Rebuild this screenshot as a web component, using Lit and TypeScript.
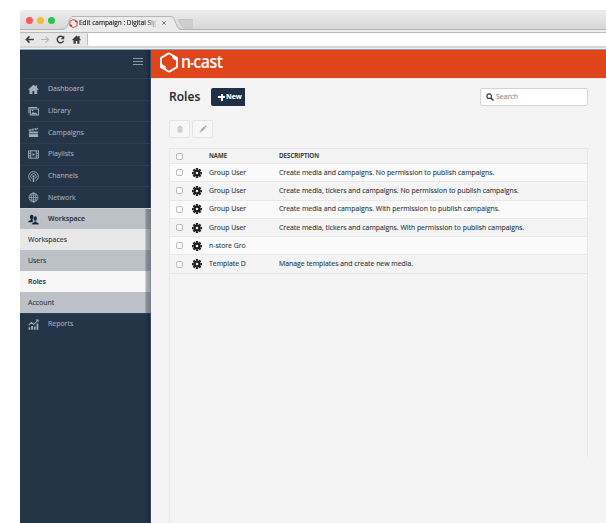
import { LitElement, html, css, svg, nothing } from "lit";
import { customElement } from "lit/decorators.js";
import { classMap } from "lit/directives/class-map.js";

const icons: Record<string, unknown> = {
  dashboard: svg`<path d="M6 .8 0 6.2h1.6V11h3.2V7.6h2V11H10V6.2h2L9.9 4.2V1.4H8.4v1.4z" fill="currentColor"/>`,
  library: svg`<path d="M1 8V1.6h9M2.5 3.3h9v6.5h-9z" fill="none" stroke="currentColor" stroke-width="1.1"/><path d="M3.2 9.2 5.6 6.4l1.7 1.4 1-.7 2.6 2.2z" fill="currentColor"/><circle cx="5" cy="5" r=".8" fill="currentColor"/>`,
  campaigns: svg`<path d="M1 5h10v6H1zM.8 2.6 11 .7v1.9L1 4.4z" fill="currentColor"/><path d="M3 1.8 4.2 4M6 1.2 7.2 3.4M9 .7l1.2 2.2M1 7.3h10" stroke="#243547" stroke-width=".8"/>`,
  playlists: svg`<path d="M.6 2h10.8v8H.6zM3 2v8M9 2v8" fill="none" stroke="currentColor" stroke-width="1"/><path d="M.6 4.6H3M.6 7.4H3M9 4.6h2.4M9 7.4h2.4" stroke="currentColor" stroke-width=".9"/><path d="M5 4.3 7.6 6 5 7.7z" fill="currentColor"/>`,
  channels: svg`<path d="M3.6 10.7A5.3 5.3 0 1 1 8.4 10.7M4.2 8.3a3 3 0 1 1 3.6 0" fill="none" stroke="currentColor" stroke-width="1"/><circle cx="6" cy="5.7" r="1.2" fill="currentColor"/><path d="M6 7v5" stroke="currentColor" stroke-width="1.5"/>`,
  network: svg`<g fill="none" stroke="currentColor" stroke-width=".8"><circle cx="6" cy="6" r="4.9"/><ellipse cx="6" cy="6" rx="2.4" ry="4.9"/><path d="M6 1v10M1 6h10M1.8 3.4h8.4M1.8 8.6h8.4"/></g>`,
  workspace: svg`<g fill="currentColor"><ellipse cx="4" cy="3.2" rx="2" ry="2.5"/><path d="M3 5h2v1.6l1 1-2 1.4H.3V7.8L3 6.600z"/></g><g fill="currentColor" stroke="#bcc1c7" stroke-width=".5"><path d="M6.900 7h2v1.600l2.900 1.100v1.900H4.200V9.700l2.700-1.100z"/><ellipse cx="7.900" cy="5" rx="2" ry="2.700"/></g>`,
  reports: svg`<path d="M.6 9h1.900v2.600H.6zM3.500 7.600h1.900v4H3.500zM6.400 8.200h1.900v3.400H6.400zM9.300 5h1.900v6.600H9.300z" fill="currentColor"/><path d="m.6 6.600 3.300-2.800L6.300 6l4-4.400" fill="none" stroke="currentColor" stroke-width="1.100"/><path d="M8.200.6h3.300v3.200z" fill="currentColor"/>`,
  gear: svg`<g fill="none" stroke="currentColor"><circle cx="6" cy="6" r="2.900" stroke-width="2.700"/><path d="M6 0v2M6 10v2M0 6h2M10 6h2M1.760 1.760l1.400 1.400M8.840 8.840l1.400 1.400M10.240 1.760l-1.400 1.400M3.160 8.840l-1.400 1.400" stroke-width="2.700"/></g>`,
  trash: svg`<path d="M2.300 3.500h7.400M4.600 3.300V1.900h2.800v1.400M3.100 4v6.500h5.800V4M4.800 5v4.500M6 5v4.500M7.200 5v4.500" fill="none" stroke="currentColor" stroke-width=".9"/>`,
  pencil: svg`<path d="m.9 11.100.7-3 2.300 2.300zM2.200 7.500l5.200-5.200 2.300 2.300-5.200 5.200zM8 1.700l.8-.8q.5-.4 1 0l1.300 1.300q.4.500 0 1l-.8.800z" fill="currentColor"/>`,
  search: svg`<circle cx="4.800" cy="4.800" r="3.500" fill="none" stroke="currentColor" stroke-width="1.700"/><path d="m7.500 7.500 3.800 3.800" stroke="currentColor" stroke-width="2.200"/>`,
  back: svg`<path d="M11.800 6H2M6 1.800 1.800 6 6 10.200" fill="none" stroke="currentColor" stroke-width="2"/>`,
  forward: svg`<path d="M.2 6H10M6 1.800 10.200 6 6 10.200" fill="none" stroke="currentColor" stroke-width="1.500"/>`,
  reload: svg`<path d="M9.700 3.500A4.400 4.400 0 1 0 10.200 7.500" fill="none" stroke="currentColor" stroke-width="1.900"/><path d="M11 .8v4.700H6.300z" fill="currentColor"/>`,
  home: svg`<path d="M6 .6.200 6.300l1 1L2 6.500V11.500h3V8h2v3.500h3v-5l.8.800 1-1-1.600-1.700V1.300H8.400v1.600z" fill="currentColor"/>`,
  hex: svg`<path d="M5.500.7Q6 .4 6.500.7L10.800 3.200V8.800L6.500 11.300Q6 11.600 5.500 11.300L1.200 8.800V3.200z" fill="none" stroke="currentColor" stroke-width="1.100" stroke-linejoin="round"/><path d="M7.500 1.300 8.300 3.700 11 5.300V3.200zM4.500 10.700 3.900 8.300 1 6.600V9z" fill="currentColor"/>`,
};

const icon = (name: string, cls = "") =>
  html`<svg class="icon ${cls}" viewBox="0 0 12 12" aria-hidden="true">${icons[name]}</svg>`;

@customElement("browser-chrome")
class BrowserChrome extends LitElement {
  static styles = css`
    :host { display: block; height: 40px; background: #e4e4e4; border-radius: 3px 0 0 0; overflow: hidden; }
    .icon { display: block; }
    .strip { display: flex; height: 20px; background: linear-gradient(#ececec, #d8d8d8); border-bottom: 1px solid #b5b5b5; box-sizing: border-box; }
    .lights { display: flex; gap: 4px; padding: 7px 0 0 6px; width: 32px; }
    .light { width: 7px; height: 7px; border-radius: 50%; flex: none; }
    .red { background: #fb5a59; } .amber { background: #fbb935; } .green { background: #24c943; }
    .tabs { position: relative; width: 135px; height: 20px; }
    .shape { display: block; width: 135px; height: 22px; }
    .label { position: absolute; inset: 7px auto auto 11px; display: flex; align-items: center; color: #252525; font: 6.500px/12px "Open Sans", sans-serif; -webkit-text-stroke: .15px; }
    .label .icon { width: 9px; height: 9px; color: #d3221d; margin-right: 1px; }
    .title { width: 79px; overflow: hidden; white-space: nowrap; -webkit-mask-image: linear-gradient(90deg, #000 84%, transparent); mask-image: linear-gradient(90deg, #000 84%, transparent); }
    .close { width: 4px; height: 4px; margin-left: 4px; color: #555; }
    .bar { display: flex; align-items: center; height: 20px; box-sizing: border-box; padding-left: 5px; color: #3d3d3d; border-bottom: 1px solid #8da0ad; background: linear-gradient(#ededed 0 2px, #b9b9b9 2px 3px, #e8e8e8 3px 16px, #d5d8da 16px 18px, #eceff0 18px); }
    .bar .icon { width: 9px; height: 9px; margin-right: 7px; flex: none; }
    .bar .forward { color: #b6b6b6; margin-right: 6px; }
    .bar .home { margin-right: 6px; }
    .address { flex: 1; align-self: flex-start; margin-top: 3px; height: 13px; background: #fff; border-left: 1px solid #bdbdbd; border-radius: 2px 0 0 2px; }
  `;
  render() {
    return html`
      <div class="strip">
        <div class="lights"><i class="light red"></i><i class="light amber"></i><i class="light green"></i></div>
        <div class="tabs">
          <svg class="shape" viewBox="0 0 135 22">
            <path d="M103.500 9.500h12.500q1.500 0 2.200 1.300l2.700 5.500q.6 1.700-1.300 1.700h-10q-2 0-2.700-1.500l-3.500-5.500q-.8-1.500.1-1.500z" fill="#cfcfcf" stroke="#b3b3b3" stroke-width=".6" transform="translate(17.500 0)"/>
            <path d="M3 20Q7 19.500 9 17L12.500 8q.8-1.500 2.500-1.500H113q1.800 0 2.500 1.500l4 9.500q1 2.200 4 2.500v2H3z" fill="#ebebeb"/>
            <path d="M3 19.500Q7 19.500 9 17L12.500 8q.8-1.500 2.500-1.500H113q1.800 0 2.500 1.500l4 9q1 2.500 4 2.500" fill="none" stroke="#aaa" stroke-width=".8"/>
          </svg>
          <div class="label">
            ${icon("hex")}<span class="title">Edit campaign : Digital Sig</span>
            <svg class="close" viewBox="0 0 4 4"><path d="m.3.3 3.400 3.400m0-3.400L.3 3.700" stroke="currentColor" stroke-width=".8"/></svg>
          </div>
        </div>
      </div>
      <div class="bar">
        ${icon("back")}${icon("forward", "forward")}${icon("reload")}${icon("home", "home")}
        <div class="address"></div>
      </div>`;
  }
}

type Item = { id: string; label: string; active?: boolean };

@customElement("side-menu")
class SideMenu extends LitElement {
  items: Item[] = [
    { id: "dashboard", label: "Dashboard" },
    { id: "library", label: "Library" },
    { id: "campaigns", label: "Campaigns" },
    { id: "playlists", label: "Playlists" },
    { id: "channels", label: "Channels" },
    { id: "network", label: "Network" },
    { id: "workspace", label: "Workspace", active: true },
    { id: "reports", label: "Reports" },
  ];
  static styles = css`
    :host { display: block; width: 131px; flex: none; background: linear-gradient(90deg, transparent 125px, #1c2b44 129px, #0e1e3c 130px, #66768a 131px), #243547; color: #a4aeb7; font: 6.950px/10px "Open Sans", sans-serif; -webkit-text-stroke: .1px; }
    .top { height: 28px; display: flex; justify-content: flex-end; padding: 8px 8px 0 0; box-sizing: border-box; }
    .burger { width: 10px; height: 5px; border: solid #8c98a2; border-width: 1px 0; background: linear-gradient(#8c98a2, #8c98a2) center / 100% 1px no-repeat; }
    .row { display: flex; align-items: center; height: 21.700px; box-sizing: border-box; padding-left: 8px; gap: 9px; border-top: 1px solid #2c3e4f; }
    .icon { width: 11px; height: 11px; flex: none; }
    .row.active, .sub { background: linear-gradient(90deg, transparent 125px, rgba(40, 48, 65, .35) 126px, rgba(40, 48, 65, .45) 130px, #75808f 131px), var(--tone); color: #243342; }
    .row.active { --tone: #bcc1c7; font-weight: 600; height: 21px; border-top-color: #cdd1d5; }
    .row.active .icon { color: #14283c; }
    .sub { --tone: #bcc1c7; height: 21px; line-height: 21.500px; padding-left: 8px; }
    .sub.light { --tone: #e8e8e8; }
    .sub.current { --tone: #f6f6f6; font-weight: 600; }
  `;
  render() {
    const subs = ["Workspaces", "Users", "Roles", "Account"];
    return html`
      <div class="top"><div class="burger"></div></div>
      ${this.items.map(
        (i) => html`<div class=${classMap({ row: true, active: !!i.active })}>${icon(i.id)}<span>${i.label}</span></div>
          ${i.active
            ? subs.map((s) => html`<div class=${classMap({ sub: true, light: s === "Workspaces", current: s === "Roles" })}>${s}</div>`)
            : nothing}`
      )}`;
  }
}

@customElement("roles-page")
class RolesPage extends LitElement {
  rows = [
    ["Group User", "Create media and campaigns. No permission to publish campaigns."],
    ["Group User", "Create media, tickers and campaigns. No permission to publish campaigns."],
    ["Group User", "Create media and campaigns. With permission to publish campaigns."],
    ["Group User", "Create media, tickers and campaigns. With permission to publish campaigns."],
    ["n-store Gro", ""],
    ["Template D", "Manage templates and create new media."],
  ];
  static styles = css`
    :host { display: flex; flex-direction: column; flex: 1; min-width: 0; background: #f4f4f4; color: #2b3640; font: 6.890px/10px "Open Sans", sans-serif; -webkit-text-stroke: .1px; }
    .brand { height: 28px; flex: none; background: #e0441a; border-bottom: 1px solid #fbe3db; display: flex; align-items: center; color: #fff; padding-left: 8px; gap: 2px; font: 600 18px/20px "Open Sans", sans-serif; letter-spacing: -.5px; }
    .logo { width: 20px; height: 21px; margin-top: -3px; }
    .word { display: flex; align-items: center; transform: translateY(-3px) scaleX(.88); transform-origin: 0 50%; }
    .dash { width: 3px; height: 2px; margin: 5px 0 0 0; background: #fff; }
    .body { flex: 1; background: linear-gradient(#e9e9e9, #e9e9e9) 18px 69px / 1px 100% no-repeat; }
    .head { display: flex; align-items: center; height: 18px; padding: 9px 18px 0 18px; }
    h1 { margin: 0; width: 42px; font: 600 12px/18px "Open Sans", sans-serif; letter-spacing: .05px; color: #222a32; }
    .new { width: 34px; height: 18px; box-sizing: border-box; padding-left: 7px; display: flex; align-items: center; gap: 1px; overflow: hidden; white-space: nowrap; background: #203147; border-radius: 2px 0 0 2px; color: #fff; font-weight: 700; font-size: 7px; }
    .plus { width: 7px; height: 7px; flex: none; background: linear-gradient(#fff, #fff) center / 100% 2px no-repeat, linear-gradient(#fff, #fff) center / 2px 100% no-repeat; }
    .search { margin-left: auto; width: 108px; height: 18px; box-sizing: border-box; border: 1px solid #d5d5d5; border-radius: 2px; background: #fff; display: flex; align-items: center; padding-left: 5px; gap: 2px; color: #8b8b8b; font-size: 7px; }
    .search .icon { width: 8px; height: 8px; color: #333; }
    .tools { display: flex; gap: 2px; margin: 14px 0 0 18px; }
    .tool { width: 21px; height: 18px; box-sizing: border-box; border: 1px solid #e5e5e5; border-radius: 2px; background: #f7f7f7; display: grid; place-items: center; color: #aaa; }
    .tool .icon { width: 8px; height: 8px; }
    .table { margin: 10px 18px 0 18px; height: 308px; border: solid #e7e7e7; border-width: 1px 1px 0 0; }
    .tr { display: grid; grid-template-columns: 16px 17px 36px 34px 1fr; align-items: center; height: 18.300px; box-sizing: border-box; border-bottom: 1px solid #e8e8e8; padding-left: 6px; margin-left: 1px; white-space: nowrap; }
    .tr:nth-child(even) { background: #fafafa; }
    .th { height: 15px; font-size: 6.200px; font-weight: 600; color: #222a33; }
    .box { width: 7px; height: 7px; box-sizing: border-box; border: 1px solid #bcbcbc; border-radius: 2px; background: #fff; }
    .gear { width: 10px; height: 10px; color: #1b1b1b; }
    .desc { grid-column: 5; }
  `;
  render() {
    return html`
      <div class="brand">${icon("hex", "logo")}<span class="word">n<i class="dash"></i>cast</span></div>
      <div class="body">
        <div class="head">
          <h1>Roles</h1>
          <div class="new"><i class="plus"></i><span>New</span></div>
          <div class="search">${icon("search")}<span>Search</span></div>
        </div>
        <div class="tools"><div class="tool">${icon("trash")}</div><div class="tool">${icon("pencil")}</div></div>
        <div class="table">
          <div class="tr th"><i class="box"></i><span></span><span>NAME</span><span class="desc">DESCRIPTION</span></div>
          ${this.rows.map(([n, d]) => html`<div class="tr"><i class="box"></i>${icon("gear", "gear")}<span>${n}</span><span class="desc">${d}</span></div>`)}
        </div>
      </div>`;
  }
}

@customElement("app-root")
class AppRoot extends LitElement {
  static styles = css`
    :host { display: block; box-sizing: border-box; height: 523px; padding: 10px 0 0 20px; overflow: hidden; background: #fff; }
    .main { display: flex; height: 472.500px; }
  `;
  render() {
    return html`<browser-chrome></browser-chrome><div class="main"><side-menu></side-menu><roles-page></roles-page></div>`;
  }
}
